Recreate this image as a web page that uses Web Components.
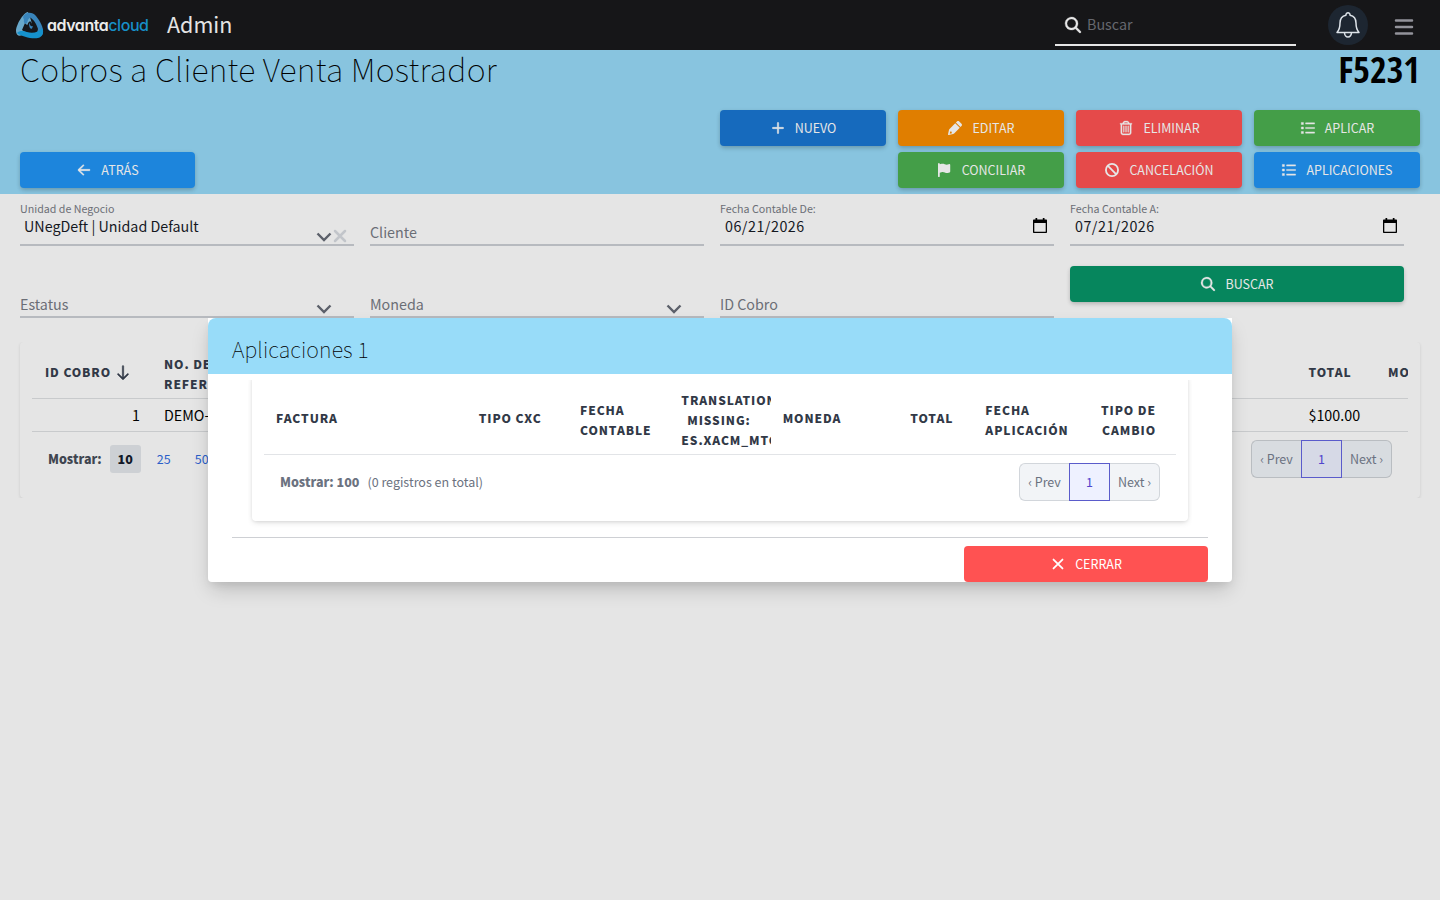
<!DOCTYPE html>
<html lang="es"><head><meta charset="utf-8"><title>Cobros a Cliente</title>
<style>
html,body{margin:0;height:100%;overflow:hidden}
body{background:#e5e5e5;font-family:"Source Sans Pro","Noto Sans CJK SC","Noto Sans",sans-serif;color:#111;font-size:14.3px;line-height:20px}
</style></head><body>
<app-page></app-page>
<script>
const define=(name,html)=>{const t=document.createElement('template');t.innerHTML=html;
customElements.define(name,class extends HTMLElement{constructor(){super();this.attachShadow({mode:'open'}).append(t.content.cloneNode(true));}});};

const ICONS={
plus:['0 0 448 512','<path stroke="currentColor" stroke-width="18" d="M432 256c0 13-11 24-24 24H248v160c0 13-11 24-24 24s-24-11-24-24V280H40c-13 0-24-11-24-24s11-24 24-24h160V72c0-13 11-24 24-24s24 11 24 24v160h160c13 0 24 11 24 24z"/>'],
pencil:['0 0 512 512','<path d="M410 18c-23-23-60-23-83 0l-38 38 167 167 38-38c23-23 23-60 0-83zM264 81 57 288c-10 10-18 24-22 38L1 481c-2 8 0 17 6 23s15 8 23 7l156-34c14-4 27-12 38-22l207-207zM144 448l-80 16 16-80h48v32h16z" fill-rule="evenodd"/>'],
trash:['0 0 448 512','<path stroke="currentColor" stroke-width="10" d="M170.500 51.600 151.500 80h145l-19-28.400c-1.500-2.200-4-3.600-6.700-3.600H177.100c-2.700 0-5.200 1.300-6.600 3.600zM354.200 80H424c13.300 0 24 10.700 24 24s-10.700 24-24 24h-8v304c0 44.200-35.800 80-80 80H112c-44.200 0-80-35.800-80-80V128h-8c-13.300 0-24-10.700-24-24s10.700-24 24-24h69.800l36.700-55.100C140.900 9.400 158.400 0 177.100 0h93.700c18.700 0 36.200 9.400 46.600 24.900zM80 128v304c0 17.700 14.300 32 32 32h224c17.700 0 32-14.300 32-32V128zm80 64v208c0 21-32 21-32 0V192c0-21 32-21 32 0zm80 0v208c0 21-32 21-32 0V192c0-21 32-21 32 0zm80 0v208c0 21-32 21-32 0V192c0-21 32-21 32 0z"/>'],
list:['0 0 512 512','<path stroke="currentColor" stroke-width="16" stroke-linejoin="round" d="M12 52h76v76H12zM12 218h76v76H12zM12 384h76v76H12zM168 68h328v44H168zM168 234h328v44H168zM168 400h328v44H168z"/>'],
flag:['0 0 512 512','<path d="M64 32a32 32 0 0 0-64 0v448a32 32 0 0 0 64 0V352l64-16c41-10 84-5 122 13 44 22 95 25 141 8l35-13c13-5 21-17 21-30V66c0-23-24-38-45-28l-10 5c-46 23-101 23-147 0-35-17-75-22-113-12L64 48z"/>'],
ban:['0 0 512 512','<g fill="none" stroke="currentColor" stroke-width="66"><circle cx="256" cy="256" r="222"/><path d="M100 100l312 312"/></g>'],
back:['0 0 448 512','<path stroke="currentColor" stroke-width="18" d="m7 239 176-168c20-18 51 14 33 34L83 232h341c32 0 32 48 0 48H83l133 127c18 20-13 52-33 34L7 273c-9-9-9-25 0-34z"/>'],
down:['0 0 384 512','<path stroke="currentColor" stroke-width="16" d="M375 329 209 495c-9 9-25 9-34 0L9 329c-18-21 12-52 34-34l125 125V40c0-32 48-32 48 0v380l125-125c22-18 52 13 34 34z"/>'],
search:['0 0 512 512','<path fill-rule="evenodd" stroke="currentColor" stroke-width="10" d="M416 208c0 46-15 88-40 123l127 126c12 13 12 33 0 46s-33 12-46 0L331 376A208 208 0 1 1 416 208zM208 352a144 144 0 1 0 0-288 144 144 0 0 0 0 288z"/>'],
close:['0 0 384 512','<path d="M28 92 356 420M356 92 28 420" stroke="currentColor" stroke-width="66" stroke-linecap="round"/>'],
bars:['0 0 18 16','<path d="M1 1.500h16M1 8h16M1 14.500h16" stroke="currentColor" stroke-width="2.500" stroke-linecap="round"/>'],
chev:['0 0 16 10','<path d="M1.500 1.500 8 8l6.500-6.500" fill="none" stroke="currentColor" stroke-width="2.400"/>'],
clear:['0 0 14 14','<path d="M2 2l10 10M12 2 2 12" stroke="currentColor" stroke-width="2.500" stroke-linecap="round"/>'],
cal:['0 0 14 15','<path fill-rule="evenodd" d="M2.500 0h1.700v1.500h5.600V0h1.700v1.500H13c.6 0 1 .4 1 1V14c0 .6-.4 1-1 1H1c-.6 0-1-.4-1-1V2.500c0-.6.4-1 1-1h1.500zM1.300 5v8.700h11.400V5z"/>'],
bell:['0 0 24 26','<g fill="none" stroke="currentColor" stroke-width="1.500" stroke-linejoin="round"><path d="M10 3.200C9.500 0 14.500 0 14 3.200c4 .8 6 4 6 7.800 0 4.500.8 7 3 9.500H1c2.200-2.500 3-5 3-9.500 0-3.800 2-7 6-7.800z"/><path d="M8.500 20.500a3.500 4.500 0 0 0 7 0"/></g>']};
customElements.define('ui-icon',class extends HTMLElement{constructor(){super();this.attachShadow({mode:'open'});}
connectedCallback(){const i=ICONS[this.getAttribute('name')];this.shadowRoot.innerHTML=`<style>:host{display:inline-flex;flex:none;width:16px;height:14px}svg{width:100%;height:100%;fill:currentColor;overflow:visible}</style><svg viewBox="${i[0]}">${i[1]}</svg>`;}});

define('ui-button',`<style>:host{display:flex;align-items:center;justify-content:center;box-sizing:border-box;height:36px;border-radius:4px;background:var(--c);color:#e6e6e6;font-size:12.500px;line-height:20px;box-shadow:0 3px 5px -1px rgba(0,0,0,.16),0 1px 4px rgba(0,0,0,.1);gap:9px}span{white-space:nowrap}</style><slot name="icon"></slot><span><slot></slot></span>`);

define('brand-logo',`<style>:host{display:flex;align-items:center;gap:3px}svg{width:29px;height:28px}b{font:600 16px/20px Inter,sans-serif;font-feature-settings:"cv11";letter-spacing:-.45px;color:#ececec;white-space:nowrap;margin-top:-1px}i{font-style:normal;font-weight:500;color:#1790c8}</style>
<svg viewBox="0 0 29 28"><path d="M13 1C8 2 1 14 1 20c0 4 3 6 6 4l3-3-3-2 3-7 3 3 4-2-2-7z" fill="#68a8ca"/><path d="M8 6c2-5 9-6 13-1 4 5 8 12 7 17-1 4-4 3-6 0l1-4C22 14 19 9 16 7c-2-1-3 2-4 5-1 2-4 0-3-3z" fill="#3984ba"/><path d="M2 22c3-3 7-2 10-1 6 2 12 0 15-4 2 4 1 9-4 10-6 1-16-1-21-5z" fill="#1591cc"/><path d="M13 12c1-1 2-3 3-1l5 8c-2 2-7 3-10 1l-3-1 2-5c1 1 3 0 3-2z" fill="#15171c"/><path d="M14 11.500c1 3 2 4.500 4 3.500l-1 2.500c-2 1-3-2-3-6z" fill="#3984ba"/></svg><b>advanta<i>cloud</i></b>`);

define('app-header',`<style>:host{display:flex;align-items:center;box-sizing:border-box;height:50px;background:#161618;color:#e4e4e4;padding:0 27px 0 15px}
h1{font-size:21.500px;font-weight:400;line-height:30px;margin:-2px 0 0 18.500px}.sp{flex:1}
.search{display:flex;box-sizing:border-box;width:241px;height:42px;margin-top:0;border-bottom:2px solid #e6e6e6;align-items:center;padding:2px 0 0 10px;gap:6px;color:#66686f}
.search span{margin-top:-2px}.search ui-icon{color:#e6e6e6;width:16px;height:16px}.bell{width:40px;height:40px;border-radius:50%;background:#1d2631;display:flex;align-items:center;justify-content:center;margin-left:32px;color:#dce2e8}.bell ui-icon{width:24px;height:26px}.menu{width:18px;height:16px;margin:3px 0 0 27px;color:#93939a}</style>
<brand-logo></brand-logo><h1>Admin</h1><div class="sp"></div><div class="search"><ui-icon name="search"></ui-icon><span>Buscar</span></div><div class="bell"><ui-icon name="bell"></ui-icon></div><ui-icon class="menu" name="bars"></ui-icon>`);

define('page-hero',`<style>:host{display:block;box-sizing:border-box;height:144px;background:#88c4df;padding:0 20px}
.t{display:flex;justify-content:space-between;height:60px}h2{font-size:32.200px;font-weight:100;letter-spacing:.22px;line-height:36px;margin:0;white-space:nowrap;color:#000}.code{font:700 36px/40px "Open Sans Condensed","Open Sans",sans-serif;font-stretch:75%;color:#000}
.row{display:flex;gap:12px;margin-bottom:6px}.row ui-button{width:166px}.row .back{width:175px;margin-right:auto}.row .first{margin-left:auto}</style>
<div class="t"><h2>Cobros a Cliente Venta Mostrador</h2><div class="code">F5231</div></div>
<div class="row"><ui-button class="first" style="--c:#166abd"><ui-icon slot="icon" name="plus"></ui-icon>NUEVO</ui-button><ui-button style="--c:#e07e00"><ui-icon slot="icon" name="pencil"></ui-icon>EDITAR</ui-button><ui-button style="--c:#e54a4a"><ui-icon slot="icon" name="trash"></ui-icon>ELIMINAR</ui-button><ui-button style="--c:#449e48"><ui-icon slot="icon" name="list"></ui-icon>APLICAR</ui-button></div>
<div class="row"><ui-button class="back" style="--c:#1d85dc"><ui-icon slot="icon" name="back"></ui-icon>ATRÁS</ui-button><ui-button style="--c:#449e48"><ui-icon slot="icon" name="flag"></ui-icon>CONCILIAR</ui-button><ui-button style="--c:#e54a4a"><ui-icon slot="icon" name="ban"></ui-icon>CANCELACIÓN</ui-button><ui-button style="--c:#1d85dc"><ui-icon slot="icon" name="list"></ui-icon>APLICACIONES</ui-button></div>`);

define('form-field',`<style>:host{display:flex;flex-direction:column;box-sizing:border-box;height:44px;border-bottom:2px solid #b7babf;color:#6b6e76}
.l{font-size:10.700px;line-height:14px;height:14px}.v{display:flex;align-items:center;flex:1;padding-right:7px}.v .txt{flex:1;white-space:nowrap}
:host([filled]) .txt{color:#15181f;padding:0 0 8px 4px}:host([date]) .txt{letter-spacing:.5px;padding-left:5px}:host(:not([filled])) .txt{padding-top:3px}
::slotted(ui-icon[name=chev]){width:16px!important;height:10px!important;margin-top:13px;color:#5c606a}::slotted(ui-icon[name=clear]){width:14px!important;height:14px!important;margin:11px 0 0 1px;color:#c2c5ca}::slotted(ui-icon[name=cal]){width:14px!important;height:15px!important;color:#000;margin-bottom:9px}
:host([lone]) .v{padding-right:22px}</style><div class="l"><slot name="label"></slot></div><div class="v"><span class="txt"><slot></slot></span><slot name="icon"></slot></div>`);

define('filter-panel',`<style>:host{display:grid;grid-template-columns:repeat(4,334px);column-gap:16px;row-gap:28px;padding:8px 20px 0}ui-button{margin-top:-8px;--c:#06865d}</style>
<form-field filled><span slot="label">Unidad de Negocio</span>UNegDeft | Unidad Default<ui-icon slot="icon" name="chev"></ui-icon><ui-icon slot="icon" name="clear"></ui-icon></form-field>
<form-field>Cliente</form-field>
<form-field filled date><span slot="label">Fecha Contable De:</span>06/21/2026<ui-icon slot="icon" name="cal"></ui-icon></form-field>
<form-field filled date><span slot="label">Fecha Contable A:</span>07/21/2026<ui-icon slot="icon" name="cal"></ui-icon></form-field>
<form-field lone>Estatus<ui-icon slot="icon" name="chev"></ui-icon></form-field>
<form-field lone>Moneda<ui-icon slot="icon" name="chev"></ui-icon></form-field>
<form-field>ID Cobro</form-field>
<ui-button><ui-icon slot="icon" name="search"></ui-icon>BUSCAR</ui-button>`);

define('page-nav',`<style>:host{display:flex;width:141px;height:38px;font-size:12.500px;line-height:36px;color:#6b7280;box-sizing:border-box}span{box-sizing:border-box;border:1px solid var(--b,#d2d6db);background:var(--g,#f2f4f7);text-align:center;white-space:nowrap}.p{width:51px;border-radius:6px 0 0 6px;border-right:0;padding-right:1px}.c{width:41px;margin-left:-1px;border-color:#5a5bcb;background:var(--a,#eef1ff);color:#5145cd}.n{width:50px;border-radius:0 6px 6px 0;border-left:0}</style><span class="p">‹ Prev</span><span class="c">1</span><span class="n">Next ›</span>`);

define('results-card',`<style>:host{display:block;box-sizing:border-box;margin:24px 20px 0;height:156px;padding:0 12px;border-radius:4px;box-shadow:0 1px 3px rgba(0,0,0,.13);clip-path:inset(0 -3px 0 -3px)}
.h,.r{display:flex;align-items:center;box-sizing:border-box;border-bottom:1px solid #c8cacc;white-space:nowrap}.h{height:57px;padding-top:4px;font-weight:900;font-size:12px;letter-spacing:.9px;color:#323947}.r{height:33px;color:#000}
.id{display:flex;gap:6px;align-items:center;width:119px;box-sizing:border-box;padding-left:13px;flex:none}.id ui-icon{width:12px;height:15px}.ref{width:1145px;box-sizing:border-box;padding-left:13px;flex:none}.h .ref{padding-top:4px}.tot{width:79px;box-sizing:border-box;flex:none;padding-left:12.500px}.mo{width:33px;box-sizing:border-box;padding-left:13px;overflow:hidden;flex:none}.r .id{justify-content:flex-end;padding-right:11px}
.f{display:flex;align-items:center;height:54px;padding:0 16px;font-size:12.500px}.f b{color:#3f4550;margin-right:8px;font-weight:900}.f i{font-style:normal;color:#2b5fc9;width:38px;text-align:center}.f .on{width:31px;height:28px;line-height:28px;border-radius:3px;background:#cdd0d4;color:#111827;font-weight:900;margin-right:4px}page-nav{margin-left:auto;--g:#d8dce0;--b:#b9bdc1;--a:#d6d9e6}</style>
<div class="h"><div class="id">ID COBRO<ui-icon name="down"></ui-icon></div><div class="ref">NO. DE<br>REFERENCIA</div><div class="tot">TOTAL</div><div class="mo">MONEDA</div></div>
<div class="r"><div class="id">1</div><div class="ref">DEMO-1</div><div class="tot">$100.00</div></div>
<div class="f"><b>Mostrar:</b><i class="on">10</i><i>25</i><i>50</i><page-nav></page-nav></div>`);

define('modal-dialog',`<style>:host{position:absolute;left:208px;top:318px;width:1024px;height:264px;background:#fff;box-shadow:0 10px 20px -3px rgba(0,0,0,.18),0 4px 8px -2px rgba(0,0,0,.08);display:block;border-radius:0 0 4px 4px}
.top{box-sizing:border-box;height:56px;border-radius:8px 8px 0 0;background:#98dcf9;padding:15px 24px;font-size:21.500px;line-height:32px;font-weight:100;letter-spacing:.1px;color:#000}
.card{box-sizing:border-box;margin:0 44px;height:147px;padding:0 12px;border-radius:4px;box-shadow:0 2px 6px -1px rgba(0,0,0,.15),0 1px 3px rgba(0,0,0,.06);clip-path:inset(6px -4px -8px -4px)}
.h{display:grid;grid-template-columns:2fr repeat(7,1fr);align-items:center;box-sizing:border-box;height:81px;padding-top:12px;border-bottom:1px solid #e2e4e7;font-size:12px;font-weight:900;letter-spacing:.92px;color:#323947}.h div{padding:0 12px;min-width:0;box-sizing:border-box}.h .one{margin-top:-4px}.h .r{text-align:right;padding-right:20px}.h .c{text-align:center;overflow:hidden;padding-right:14px}
.f{display:flex;height:54px;align-items:center;padding:0 16px;font-size:12.500px;color:#6b7280}.f b{margin-right:8px;font-weight:900}page-nav{margin-left:auto}
.foot{margin:16px 24px 0;border-top:1px solid #ced0d4;padding-top:8px}ui-button{width:244px;margin-left:auto;--c:#ff5252;color:#fff;box-shadow:none}</style>
<div class="top">Aplicaciones 1</div>
<div class="card"><div class="h"><div class="one">FACTURA</div><div class="one">TIPO CXC</div><div>FECHA CONTABLE</div><div class="c">TRANSLATION MISSING: ES.XACM_MTC</div><div class="one">MONEDA</div><div class="r one">TOTAL</div><div>FECHA APLICACIÓN</div><div class="r">TIPO DE CAMBIO</div></div>
<div class="f"><b>Mostrar: 100</b><span>(0 registros en total)</span><page-nav></page-nav></div></div>
<div class="foot"><ui-button><ui-icon slot="icon" name="close"></ui-icon>CERRAR</ui-button></div>`);

define('app-page',`<style>:host{display:block;position:relative;width:1440px;height:900px;overflow:hidden}</style><app-header></app-header><page-hero></page-hero><filter-panel></filter-panel><results-card></results-card><modal-dialog></modal-dialog>`);
</script></body></html>
